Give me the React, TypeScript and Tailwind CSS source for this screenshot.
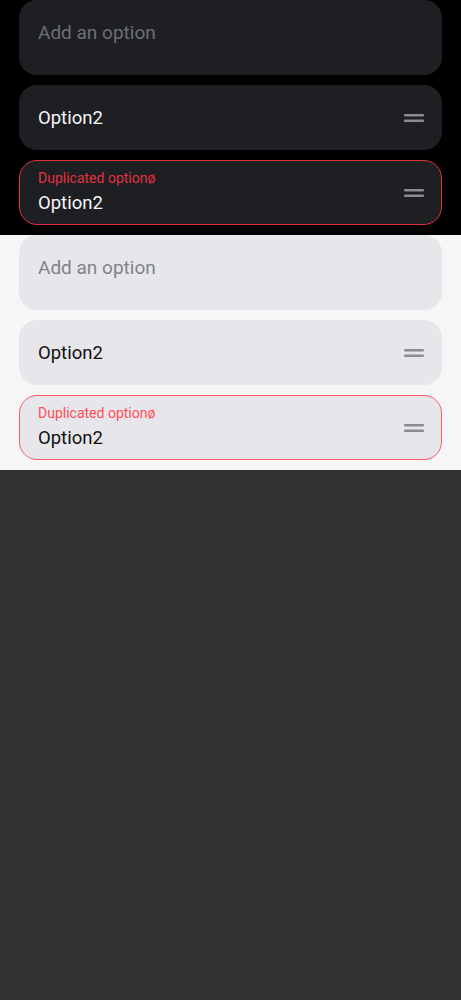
import React from "react";

function Handle({ color }: { color: string }) {
  return (
    <svg width="20" height="10" viewBox="0 0 20 10" className="shrink-0">
      <rect x="0" y="1" width="20" height="2.4" rx="1" fill={color} />
      <rect x="0" y="6.6" width="20" height="2.4" rx="1" fill={color} />
    </svg>
  );
}

function Section({ dark }: { dark: boolean }) {
  const box = dark ? "bg-[#1e1f23]" : "bg-[#e7e7eb]";
  const text = dark ? "text-[#f5f5f5]" : "text-[#111111]";
  const ph = dark ? "text-[#6c6e74]" : "text-[#80828a]";
  const red = dark ? "border-[#e2323d]" : "border-[#ff5963]";
  const redText = dark ? "text-[#e2323d]" : "text-[#ff4d58]";
  const handle = "#8a8c92";
  return (
    <div className={`${dark ? "bg-black" : "bg-[#f6f6f6]"} px-[19px] pb-[10px] flex flex-col gap-[10px]`}>
      <div className={`${box} h-[75px] rounded-[18px] px-[19px] pt-[20px]`}>
        <div className={`${ph} text-[19px] leading-[26px]`}>Add an option</div>
      </div>
      <div className={`${box} h-[65px] rounded-[18px] pl-[19px] pr-[18px] flex items-center justify-between`}>
        <div className={`${text} text-[18.5px] leading-[24px]`}>Option2</div>
        <Handle color={handle} />
      </div>
      <div className={`${box} h-[65px] rounded-[18px] border ${red} pl-[18px] pr-[17px] flex items-center justify-between`}>
        <div className="flex flex-col gap-[6px]">
          <div className={`${redText} text-[14px] leading-[14px]`}>Duplicated optionø</div>
          <div className={`${text} text-[18.5px] leading-[24px]`}>Option2</div>
        </div>
        <Handle color={handle} />
      </div>
    </div>
  );
}

export default function App() {
  return (
    <div className="min-h-[1000px] bg-[#313131]" style={{ fontFamily: "Roboto, sans-serif" }}>
      <Section dark />
      <Section dark={false} />
    </div>
  );
}
